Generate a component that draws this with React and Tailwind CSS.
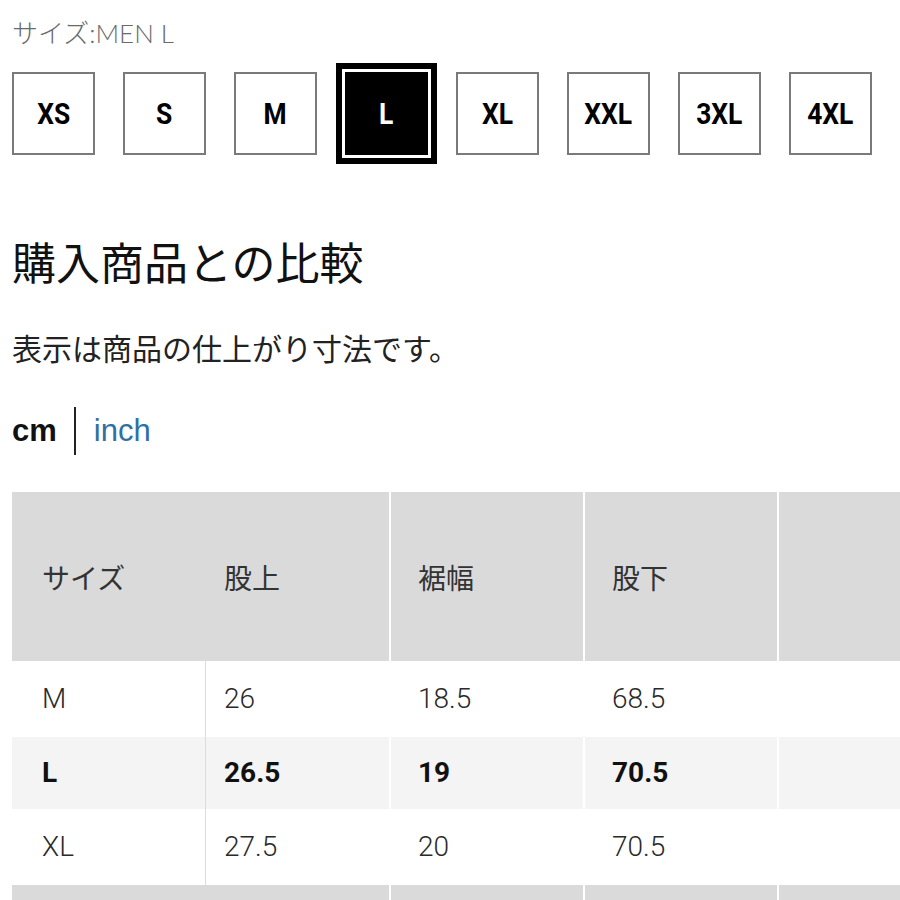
import React from "react";

const sizes = ["XS", "S", "M", "L", "XL", "XXL", "3XL", "4XL"];

const headers = ["サイズ", "股上", "裾幅", "股下", ""];

const rows = [
    { size: "M", values: ["26", "18.5", "68.5", ""], h: "h-[76px]" },
    { size: "L", values: ["26.5", "19", "70.5", ""], h: "h-[72px]", current: true },
    { size: "XL", values: ["27.5", "20", "70.5", ""], h: "h-[76px]" },
];

// column cells: left borders and paddings per column
const headCell = [
    "pl-[30px]",
    "pl-[19px]",
    "pl-[27px] border-l-2 border-white",
    "pl-[27px] border-l-2 border-white",
    "pl-[27px] border-l-2 border-white",
];
const bodyCell = [
    "pl-[30px]",
    "pl-[18px] border-l border-[#dcdcdc]",
    "pl-[27px] border-l-2 border-white",
    "pl-[27px] border-l-2 border-white",
    "pl-[27px] border-l-2 border-white",
];

const App = () => {
    return (
        <div className="w-[900px] h-[900px] overflow-hidden bg-white pl-3 font-['Liberation_Sans','Noto_Sans_CJK_JP',sans-serif] text-[#111]">
            <p className="pt-[18px] text-[26px] leading-[30px] text-[#6a6a6a] font-['Lato','Noto_Sans_CJK_JP',sans-serif] font-light">
                サイズ:MEN L
            </p>

            <div className="mt-[24px] flex gap-[28px]">
                {sizes.map((s) =>
                    s === "L" ? (
                        <div
                            key={s}
                            className="w-[83px] h-[83px] shrink-0 bg-black flex items-center justify-center shadow-[0_0_0_3px_#fff,0_0_0_9px_#000]"
                        >
                            <span className="inline-block scale-x-88 text-white font-['Roboto',sans-serif] font-bold text-[30px] leading-none">
                                {s}
                            </span>
                        </div>
                    ) : (
                        <div
                            key={s}
                            className="w-[83px] h-[83px] shrink-0 border-2 border-[#7a7a7a] flex items-center justify-center"
                        >
                            <span className="inline-block scale-x-88 text-black font-['Roboto',sans-serif] font-bold text-[30px] leading-none">
                                {s}
                            </span>
                        </div>
                    )
                )}
            </div>

            <h1 className="mt-[80px] text-[44px] leading-[52px] font-normal font-['Noto_Sans_CJK_JP',sans-serif] text-[#111]">
                購入商品との比較
            </h1>

            <p className="mt-[40px] text-[30px] leading-[40px] font-['Noto_Sans_CJK_JP',sans-serif] text-[#222]">
                表示は商品の仕上がり寸法です。
            </p>

            <div className="mt-[40px] h-[48px] flex items-center">
                <span className="text-[31px] font-bold text-[#111]">cm</span>
                <span className="ml-[17px] w-[2px] h-[48px] bg-[#222]" />
                <span className="ml-[18px] text-[31px] text-[#2f6fa3]">inch</span>
            </div>

            <div className="mt-[37px] overflow-hidden">
                <div className="w-[1000px]">
                    <div className="grid grid-cols-[193px_184px_194px_194px_235px] h-[169px] bg-[#dadada]">
                        {headers.map((h, i) => (
                            <div
                                key={i}
                                className={`${headCell[i]} flex items-center text-[28px] text-[#333] font-['Noto_Sans_CJK_JP',sans-serif]`}
                            >
                                {h}
                            </div>
                        ))}
                    </div>

                    {rows.map((r) => (
                        <div
                            key={r.size}
                            className={`grid grid-cols-[193px_184px_194px_194px_235px] ${r.h} ${r.current ? "bg-[#f4f4f4]" : "bg-white"}`}
                        >
                            {[r.size, ...r.values].map((v, i) => (
                                <div
                                    key={i}
                                    className={`${bodyCell[i]} flex items-center text-[28px] font-['Roboto',sans-serif] ${
                                        r.current ? "font-bold text-[#111]" : "font-light text-[#2a2a2a]"
                                    }`}
                                >
                                    {v}
                                </div>
                            ))}
                        </div>
                    ))}

                    <div className="grid grid-cols-[193px_184px_194px_194px_235px] h-[60px] bg-[#dadada]">
                        {headers.map((h, i) => (
                            <div key={i} className={headCell[i]} />
                        ))}
                    </div>
                </div>
            </div>
        </div>
    );
};

export default App;
